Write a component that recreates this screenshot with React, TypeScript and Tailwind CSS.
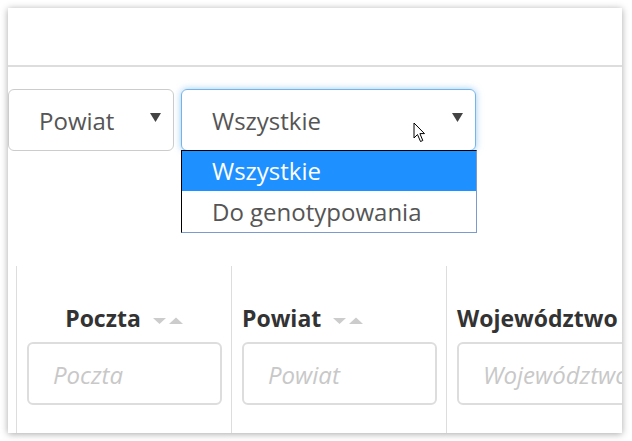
import React from "react";

function Caret() {
  return (
    <svg width="11" height="9" viewBox="0 0 11 9" className="shrink-0">
      <path d="M0 0 L11 0 L5.5 9 Z" fill="#444" />
    </svg>
  );
}

function SortIcons() {
  return (
    <svg width="30" height="7" viewBox="0 0 30 7" className="ml-3 mt-1 shrink-0">
      <path d="M0 1 L13 1 L6.5 7 Z" fill="#ccc" />
      <path d="M16 7 L30 7 L23 0.5 Z" fill="#ccc" />
    </svg>
  );
}

function Cursor() {
  return (
    <svg
      width="14"
      height="21"
      viewBox="0 0 14 21"
      className="absolute left-[232px] top-[33px]"
    >
      <path
        d="M1 1 L1 16 L4.5 12.5 L7.5 19.5 L9.8 18.5 L6.9 11.6 L11.5 11.6 Z"
        fill="#fff"
        stroke="#000"
        strokeWidth="1"
        strokeLinejoin="round"
      />
    </svg>
  );
}

const columns = [
  { title: "Poczta", center: true, sort: true },
  { title: "Powiat", center: false, sort: true },
  { title: "Województwo", center: false, sort: false },
];

export default function App() {
  return (
    <div className="min-h-screen bg-white pt-2 pl-2 font-['Open_Sans',sans-serif]">
      <div className="flex h-[425px] w-[614px] flex-col overflow-hidden bg-white shadow-[0_1px_7px_rgba(0,0,0,0.35)]">
        <div className="h-[59px] shrink-0 border-b-2 border-[#ddd]" />

        <div className="mt-[22px] flex gap-[7px]">
          <div className="flex h-[62px] w-[166px] items-start justify-between rounded-md border-[1.5px] border-[#ccc] pl-[30px] pr-[12px]">
            <span className="mt-[16px] text-[24px] leading-[30px] text-[#555]">Powiat</span>
            <span className="mt-[23px]">
              <Caret />
            </span>
          </div>

          <div className="relative w-[295px]">
            <div className="flex h-[62px] items-start justify-between rounded-md border-[1.5px] border-[#74b4ea] pl-[30px] pr-[12px] shadow-[0_0_7px_rgba(102,175,233,0.65)]">
              <span className="mt-[16px] text-[24px] leading-[30px] text-[#555]">Wszystkie</span>
              <span className="mt-[23px]">
                <Caret />
              </span>
            </div>
            <Cursor />
            <ul className="absolute left-0 top-[61px] z-10 w-[296px] border border-t-black border-l-black border-r-[#7a9ad0] border-b-[#7a9ad0] bg-white">
              <li className="flex h-[40px] items-center bg-[#1e90ff] pl-[30px] text-[24px] text-white">
                Wszystkie
              </li>
              <li className="flex h-[41px] items-center pl-[30px] text-[24px] text-[#555]">
                Do genotypowania
              </li>
            </ul>
          </div>
        </div>

        <div className="mt-[115px] flex flex-1 pl-2">
          {columns.map((c) => (
            <div
              key={c.title}
              className="flex w-[215px] shrink-0 flex-col border-l border-[#ddd] px-[10px] pt-[37px]"
            >
              <div
                className={
                  "flex h-[30px] items-center whitespace-nowrap " +
                  (c.center ? "justify-center" : "justify-start")
                }
              >
                <span className="text-[23px] font-bold leading-[30px] text-[#333]">{c.title}</span>
                {c.sort && <SortIcons />}
              </div>
              <div className="mt-[9px] flex h-[63px] w-[195px] shrink-0 items-center overflow-hidden rounded-md border-2 border-[#ddd] pl-[24px]">
                <span className="mt-[2px] whitespace-nowrap text-[24px] italic text-[#c8c8c8]">{c.title}</span>
              </div>
            </div>
          ))}
        </div>
      </div>
    </div>
  );
}
